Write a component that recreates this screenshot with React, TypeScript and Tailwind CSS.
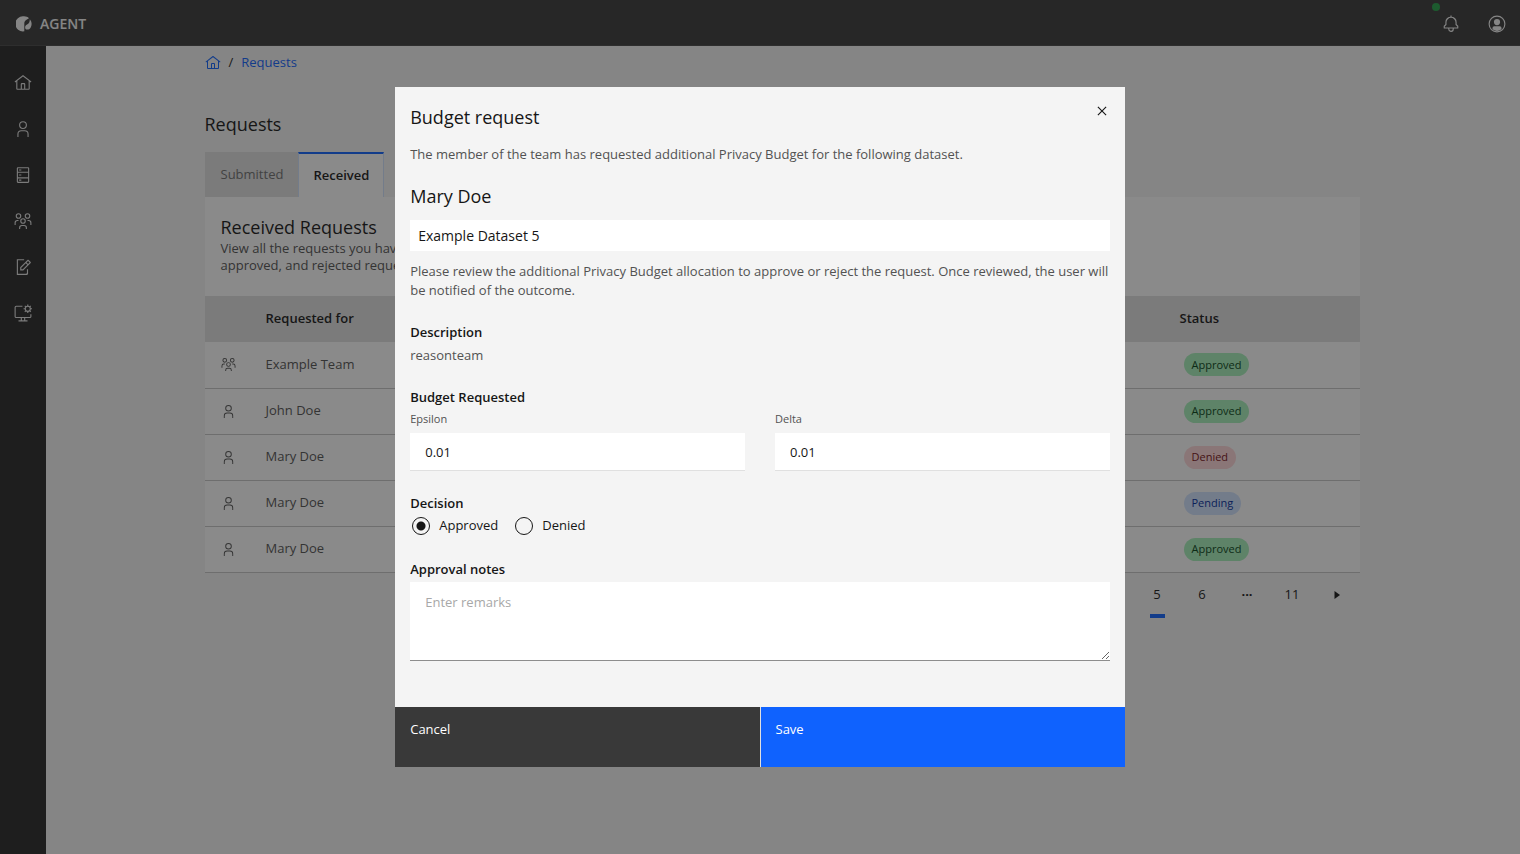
import React from 'react';
import clsx from 'clsx';

const iconPaths = {
  home: 'M16.6 2.2a1 1 0 0 0-1.2 0L1 13.4 2.2 15 4 13.6V26a2 2 0 0 0 2 2h20a2 2 0 0 0 2-2V13.6L29.8 15 31 13.4ZM18 26h-4v-8h4Zm2 0v-8a2 2 0 0 0-2-2h-4a2 2 0 0 0-2 2v8H6V12.1l10-7.8 10 7.8V26Z',
  user: 'M16 4a5 5 0 1 1-5 5 5 5 0 0 1 5-5m0-2a7 7 0 1 0 7 7 7 7 0 0 0-7-7ZM26 30h-2v-5a5 5 0 0 0-5-5h-6a5 5 0 0 0-5 5v5H6v-5a7 7 0 0 1 7-7h6a7 7 0 0 1 7 7Z',
  team: 'M26 14h-2v2h2a3 3 0 0 1 3 3v4h2v-4a5 5 0 0 0-5-5ZM24 4a3 3 0 1 1-3 3 3 3 0 0 1 3-3m0-2a5 5 0 1 0 5 5 5 5 0 0 0-5-5ZM23 30h-2v-2a3 3 0 0 0-3-3h-4a3 3 0 0 0-3 3v2H9v-2a5 5 0 0 1 5-5h4a5 5 0 0 1 5 5ZM16 13a3 3 0 1 1-3 3 3 3 0 0 1 3-3m0-2a5 5 0 1 0 5 5 5 5 0 0 0-5-5ZM8 14H6a5 5 0 0 0-5 5v4h2v-4a3 3 0 0 1 3-3h2ZM8 4a3 3 0 1 1-3 3 3 3 0 0 1 3-3m0-2a5 5 0 1 0 5 5 5 5 0 0 0-5-5Z',
  data: 'M25 2H7a2 2 0 0 0-2 2v24a2 2 0 0 0 2 2h18a2 2 0 0 0 2-2V4a2 2 0 0 0-2-2Zm0 2v6H7V4ZM7 20v-8h18v8ZM7 28v-6h18v6ZM9 6h4v2H9ZM9 15h4v2H9ZM9 24h4v2H9Z',
  edit: 'M25 26v-6h-2v6a2 2 0 0 1-2 2H7V4h11V2H5v28h18a2 2 0 0 0 2-2ZM29.700 7.300l-4-4a1 1 0 0 0-1.400 0L11 16.600V22h5.400L29.700 8.700a1 1 0 0 0 0-1.400ZM15.600 20H13v-2.600l8-8 2.600 2.600ZM25 10.600 22.400 8 25 5.400 27.600 8Z',
  bell: 'M28.7 19.3 26 16.600V13a10 10 0 0 0-9-9.900V1h-2v2.100A10 10 0 0 0 6 13v3.600l-2.700 2.700A1 1 0 0 0 3 20v3a1 1 0 0 0 1 1h7v.8a5.200 5.200 0 0 0 4.500 5.200A5 5 0 0 0 21 25v-1h7a1 1 0 0 0 1-1v-3a1 1 0 0 0-.3-.7ZM19 25a3 3 0 0 1-6 0v-1h6Zm8-3H5v-1.600l2.700-2.700A1 1 0 0 0 8 17v-4a8 8 0 0 1 16 0v4a1 1 0 0 0 .3.700l2.700 2.700Z',
  close: 'M24 9.400 22.600 8 16 14.600 9.400 8 8 9.400l6.600 6.600L8 22.600 9.400 24l6.600-6.600 6.600 6.600 1.400-1.400-6.600-6.600Z',
  caret: 'M11 24V8l11 8Z',
};

const Icon = ({ name, className }: { name: keyof typeof iconPaths; className: string }) => (
  <svg viewBox="0 0 32 32" fill="currentColor" aria-hidden="true" className={className}>
    <path fillRule="evenodd" d={iconPaths[name]} />
  </svg>
);

const ScreenGearIcon = () => (
  <svg viewBox="0 0 32 32" fill="none" stroke="currentColor" strokeWidth="2" aria-hidden="true" className="size-[18px]">
    <path d="M15 4H4a2 2 0 0 0-2 2v16a2 2 0 0 0 2 2h24a2 2 0 0 0 2-2v-4M13 24v5M19 24v5M8 30h16" />
    <circle cx="24.500" cy="8.500" r="4.500" />
    <path d="M24.500 1v3M24.500 13v3M17 8.500h3M29 8.500h3M19.200 3.200l2 2M27.800 11.800l2 2M29.800 3.200l-2 2M21.200 11.800l-2 2" />
  </svg>
);

const AvatarIcon = () => (
  <svg viewBox="0 0 32 32" aria-hidden="true" className="size-[18px]">
    <circle cx="16" cy="16" r="14" fill="none" stroke="currentColor" strokeWidth="2" />
    <circle cx="16" cy="12.500" r="5.500" fill="currentColor" />
    <path d="M8 25.500V23a3 3 0 0 1 3-3h10a3 3 0 0 1 3 3v2.500a13 13 0 0 1-16 0Z" fill="currentColor" />
  </svg>
);

const Logo = () => (
  <svg viewBox="0 0 16 16" fill="currentColor" aria-hidden="true" className="size-4">
    <path d="M8 .3c2 0 3.700.7 5 1.900-1.200.9-2.200 1.200-3.200 2C8.700 5.100 8.300 6.100 8.300 7.500v7.800A7.600 7.600 0 1 1 8 .3Z" />
    <path d="M13.800 3.200c2.300 2.700 2.200 6.100.9 8.200-.9 1.500-2.300 2.300-3.700 2.200-1.300-.1-1.900-.9-1.900-2.100 0-1.500.6-2.400 2-3 1.800-.8 2.800-2.300 2.700-5.300Z" />
  </svg>
);

const navItems: { label: string; icon: keyof typeof iconPaths | 'screen' }[] = [
  { label: 'Home', icon: 'home' },
  { label: 'Users', icon: 'user' },
  { label: 'Datasets', icon: 'data' },
  { label: 'Teams', icon: 'team' },
  { label: 'Requests', icon: 'edit' },
  { label: 'Settings', icon: 'screen' },
];

const requests = [
  { id: 1, name: 'Example Team', icon: 'team', status: 'Approved' },
  { id: 2, name: 'John Doe', icon: 'user', status: 'Approved' },
  { id: 3, name: 'Mary Doe', icon: 'user', status: 'Denied' },
  { id: 4, name: 'Mary Doe', icon: 'user', status: 'Pending' },
  { id: 5, name: 'Mary Doe', icon: 'user', status: 'Approved' },
] as const;

const statusStyles = {
  Approved: 'bg-[#a7f0ba] text-[#044317]',
  Denied: 'bg-[#ffd7d9] text-[#750e13]',
  Pending: 'bg-[#d0e2ff] text-[#002d9c]',
};

const Header = () => (
  <header className="flex h-[46px] items-center justify-between border-b border-[#474747] bg-[#393939] pt-[3px] pr-[18px] pl-4 text-[#f4f4f4]">
    <div className="flex items-center gap-2">
      <Logo />
      <span className="text-sm font-semibold">AGENT</span>
    </div>
    <div className="flex items-center gap-7">
      <button aria-label="Notifications" className="relative">
        <Icon name="bell" className="size-[18px]" />
        <span className="absolute -top-3 -left-[10px] size-2 rounded-full bg-[#24a148]" />
      </button>
      <button aria-label="Account" className="-mr-1">
        <AvatarIcon />
      </button>
    </div>
  </header>
);

const Sidebar = () => (
  <nav className="flex w-[46px] shrink-0 flex-col bg-[#262626] pt-[14px] text-[#e0e0e0]">
    {navItems.map((item) => (
      <a key={item.label} href="#" aria-label={item.label} className="flex h-[46px] items-center justify-center">
        {item.icon === 'screen' ? <ScreenGearIcon /> : <Icon name={item.icon} className="size-[18px]" />}
      </a>
    ))}
  </nav>
);

const RequestsTable = () => (
  <table className="w-full border-collapse text-left">
    <thead className="bg-[#e0e0e0]">
      <tr className="h-[46px]">
        <th className="w-[45px]" />
        <th className="px-4 font-semibold">Requested for</th>
        <th className="w-[196px] px-4 font-semibold">Status</th>
      </tr>
    </thead>
    <tbody className="bg-white text-[#525252]">
      {requests.map((request) => (
        <tr key={request.id} className="h-[46px] border-b border-[#c6c6c6]">
          <td className="pl-4">
            <Icon name={request.icon} className="size-[15px]" />
          </td>
          <td className="px-4">{request.name}</td>
          <td className="px-4">
            <span className={`ml-1 inline-flex h-[23px] items-center rounded-full px-2 text-[11px] ${statusStyles[request.status]}`}>
              {request.status}
            </span>
          </td>
        </tr>
      ))}
    </tbody>
  </table>
);

const Pagination = () => (
  <div className="flex justify-end">
    {['5', '6', '…', '11'].map((page) => (
      <button key={page} className="relative h-[45px] w-[45px]">
        {page === '…' ? <span className="font-bold">···</span> : page}
        {page === '5' && <span className="absolute inset-x-[15px] bottom-0 h-1 bg-[#0f62fe]" />}
      </button>
    ))}
    <button aria-label="Next page" className="flex h-[45px] w-[45px] items-center justify-center">
      <Icon name="caret" className="size-4" />
    </button>
  </div>
);

const RequestsPage = () => (
  <main className="flex-1 pr-8 pl-[30px]">
    <div className="mx-auto max-w-[1155px]">
      <div className="flex h-[33px] items-center gap-2">
        <a href="#" aria-label="Home" className="text-[#0f62fe]">
          <Icon name="home" className="size-4" />
        </a>
        <span>/</span>
        <a href="#" className="text-[#0f62fe]">Requests</a>
      </div>

      <h1 className="mt-8 mb-[14px] text-lg leading-[27px]">Requests</h1>

      <div role="tablist" className="flex h-[45px]">
        <button role="tab" aria-selected="false" className="bg-[#e0e0e0] pr-[15px] pl-4 text-[#6f6f6f]">Submitted</button>
        <button role="tab" aria-selected="true" className="border-x border-t-2 border-x-[#d0e2ff] border-t-[#0f62fe] bg-white px-[14px] font-semibold">
          Received
        </button>
      </div>

      <section className="bg-white">
        <div className="h-[99px] max-w-[430px] px-4 pt-[17px]">
          <h2 className="text-lg leading-[26px]">Received Requests</h2>
          <p className="leading-[17px] text-[#525252]">
            View all the requests you have received, including pending, approved, and rejected requests
          </p>
        </div>
        <RequestsTable />
      </section>
      <Pagination />
    </div>
  </main>
);

const BudgetField = ({ id, label }: { id: string; label: string }) => (
  <div className="flex-1">
    <label htmlFor={id} className="block text-[11px] leading-4 text-[#525252]">{label}</label>
    <input id={id} defaultValue="0.01" className="mt-[6px] h-[38px] w-full border-b border-[#e0e0e0] bg-white px-[15px] outline-none" />
  </div>
);

const DecisionOption = ({ label, checked }: { label: string; checked?: boolean }) => (
  <label className="flex items-center gap-[9px]">
    <input
      type="radio"
      name="decision"
      defaultChecked={checked}
      className="size-[18px] appearance-none rounded-full border border-[#161616] checked:bg-[radial-gradient(circle,#161616_4px,transparent_5px)]"
    />
    {label}
  </label>
);

const BudgetDialog = () => (
  <div role="dialog" aria-modal="true" aria-labelledby="dialog-title" className="relative w-[48%] min-w-[480px] bg-[#f4f4f4]">
    <button aria-label="Close" className="absolute top-[15px] right-[14px]">
      <Icon name="close" className="size-[18px]" />
    </button>

    <div className="px-[15px] pt-[17px] pb-[46px]">
      <h2 id="dialog-title" className="text-lg leading-[27px]">Budget request</h2>
      <p className="mt-[14px] leading-[19px] text-[#525252]">
        The member of the team has requested additional Privacy Budget for the following dataset.
      </p>

      <h3 className="mt-[19px] text-lg leading-[26px]">Mary Doe</h3>
      <div className="mt-[11px] bg-white px-2 text-sm leading-[31px]">Example Dataset 5</div>
      <p className="mt-[11px] leading-[19px] text-[#525252]">
        Please review the additional Privacy Budget allocation to approve or reject the request. Once reviewed, the user will be notified of the outcome.
      </p>

      <h4 className="mt-[23px] leading-[19px] font-semibold">Description</h4>
      <p className="mt-1 leading-[19px] text-[#525252]">reasonteam</p>

      <h4 className="mt-[23px] leading-[19px] font-semibold">Budget Requested</h4>
      <div className="mt-1 flex gap-[30px]">
        <BudgetField id="epsilon" label="Epsilon" />
        <BudgetField id="delta" label="Delta" />
      </div>

      <fieldset className="mt-[23px]">
        <legend className="leading-[19px] font-semibold">Decision</legend>
        <div className="mt-[3px] flex gap-[17px] pl-[2px] leading-[19px]">
          <DecisionOption label="Approved" checked />
          <DecisionOption label="Denied" />
        </div>
      </fieldset>

      <label htmlFor="notes" className="mt-[25px] block leading-[19px] font-semibold">Approval notes</label>
      <textarea
        id="notes"
        placeholder="Enter remarks"
        className="mt-[3px] block h-[79px] w-full border-b border-[#8d8d8d] bg-white px-[15px] py-[11px] leading-[19px] outline-none placeholder:text-[#a8a8a8]"
      />
    </div>

    <div className="flex">
      {['Cancel', 'Save'].map((action) => (
        <button
          key={action}
          className={clsx(
            'flex h-[60px] flex-1 px-[15px] pt-[13px] leading-[19px] text-white',
            action === 'Save' ? 'border-l border-[#e0e0e0] bg-[#0f62fe]' : 'bg-[#393939]'
          )}
        >
          {action}
        </button>
      ))}
    </div>
  </div>
);

const App = () => (
  <div className="flex min-h-screen flex-col bg-[#f4f4f4] font-['Open_Sans',sans-serif] text-[13px] text-[#161616]">
    <Header />
    <div className="flex flex-1">
      <Sidebar />
      <RequestsPage />
    </div>
    <div className="fixed inset-0 flex items-center justify-center bg-[#161616]/50">
      <BudgetDialog />
    </div>
  </div>
);

export default App;
